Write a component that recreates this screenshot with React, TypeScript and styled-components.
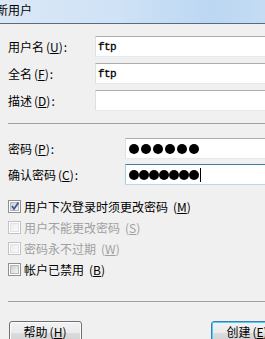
import React from "react";
import styled, { createGlobalStyle } from "styled-components";

const Global = createGlobalStyle`
  html, body { margin: 0; padding: 0; background: #f0f0f0; }
  body { font-family: "Noto Sans CJK SC", "Noto Sans", sans-serif; }
`;

const Window = styled.div`
  width: 265px;
  height: 339px;
  overflow: hidden;
  background: #f0f0f0;
  display: flex;
  flex-direction: column;
  font-size: 12px;
  color: #000;
`;

const TitleBar = styled.div`
  flex: none;
  border-bottom: 1px solid #5a6a80;
  background: linear-gradient(90deg, #dbe8f6 0%, #cfe2f6 45%, #bcd7f3 80%, #c4dcf4 100%);
  display: flex;
  align-items: center;
  box-sizing: border-box;
  height: 24px;
`;

const TitleText = styled.span`
  margin-left: -4px;
  font-size: 12px;
  line-height: 14px;
  color: #000;
  margin-top: -3px;
`;

const Section = styled.div<{ $top: number; $gap: number }>`
  display: flex;
  flex-direction: column;
  gap: ${(p) => p.$gap}px;
  padding-top: ${(p) => p.$top}px;
  padding-left: 8px;
`;

const Row = styled.div`
  display: flex;
  align-items: center;
  height: 21px;
`;

const Label = styled.div<{ $w: number }>`
  width: ${(p) => p.$w}px;
  flex: none;
  font-size: 12px;
  line-height: 14px;
  white-space: nowrap;
  padding-top: 1px;
`;

const TextBox = styled.div<{ $focus?: boolean }>`
  width: 200px;
  height: 21px;
  box-sizing: border-box;
  flex: none;
  background: #fff;
  border: 1px solid;
  border-color: ${(p) =>
    p.$focus ? "#3d7bad #b5cfe7 #b7d9ed #a4c9e3" : "#abadb3 #e3e9ef #e3e9ef #dbdfe6"};
  border-radius: 1px;
  display: flex;
  align-items: center;
  padding-left: 2px;
  font-family: "Liberation Mono", "DejaVu Sans Mono", monospace;
  font-size: 11px;
  letter-spacing: -0.6px;
  -webkit-text-stroke: 0.3px #000;
`;

const Dots = styled.div<{ $step: number }>`
  display: flex;
  align-items: center;
  gap: ${(p) => p.$step - 10}px;
  padding-left: 1px;
`;

const Dot = styled.span`
  width: 10px;
  height: 10px;
  border-radius: 50%;
  background: #000;
  flex: none;
`;

const Caret = styled.span`
  width: 1px;
  height: 14px;
  background: #000;
  margin-left: 1px;
`;

const Separator = styled.div<{ $top: number }>`
  height: 1px;
  background: #a0a0a0;
  margin-left: 8px;
  margin-top: ${(p) => p.$top}px;
  flex: none;
`;

const CheckRow = styled.div<{ $disabled?: boolean }>`
  display: flex;
  align-items: center;
  gap: 3px;
  height: 13px;
  color: ${(p) => (p.$disabled ? "#a0a0a0" : "#000")};
  font-size: 12px;
  line-height: 14px;
  white-space: nowrap;
`;

const Box = styled.span<{ $disabled?: boolean }>`
  position: relative;
  width: 13px;
  height: 13px;
  box-sizing: border-box;
  flex: none;
  border: 1px solid ${(p) => (p.$disabled ? "#c2c2c2" : "#8e8f8f")};
  background: #fff;
  &::before {
    content: "";
    position: absolute;
    left: 1px;
    top: 1px;
    width: 9px;
    height: 9px;
    box-sizing: border-box;
    border: 1px solid ${(p) => (p.$disabled ? "#e2e2e2" : "#b8b8b8")};
    background: ${(p) =>
      p.$disabled
        ? "linear-gradient(135deg, #ececec, #fafafa)"
        : "linear-gradient(135deg, #cfcfcf, #f4f4f4)"};
  }
`;

const Check = styled.svg`
  position: absolute;
  left: 1px;
  top: 0px;
  width: 10px;
  height: 10px;
`;

const Footer = styled.div`
  display: flex;
  gap: 129px;
  padding-left: 9px;
  margin-top: 19px;
`;

const Button = styled.div<{ $default?: boolean }>`
  width: 73px;
  height: 23px;
  flex: none;
  box-sizing: border-box;
  border: 1px solid ${(p) => (p.$default ? "#3c7fb1" : "#707070")};
  border-radius: 3px;
  background: linear-gradient(#f2f2f2 0%, #ebebeb 50%, #dddddd 51%, #cfcfcf 100%);
  box-shadow: inset 0 0 0 1px ${(p) => (p.$default ? "#48d0f6" : "#fcfcfc")};
  display: flex;
  justify-content: center;
  padding-top: 3px;
  font-size: 12px;
  line-height: 14px;
  white-space: nowrap;
`;

const AccKey = styled.span`
  margin-left: 2px;
  margin-right: 1px;
`;

const CheckMark = () => (
  <Check viewBox="0 0 10 10">
    <path d="M2 5 L4 8 L8.5 1.5" fill="none" stroke="#3d5a96" strokeWidth="1.8" />
  </Check>
);

const Acc = ({ k }: { k: string }) => (
  <AccKey>
    (<u>{k}</u>)
  </AccKey>
);

const dots = (n: number) =>
  Array.from({ length: n }, (_, i) => <Dot key={i} />);

export default function App() {
  return (
    <>
      <Global />
      <Window>
        <TitleBar>
          <TitleText>新用户</TitleText>
        </TitleBar>

        <Section $top={12} $gap={6}>
          <Row>
            <Label $w={87}>用户名<Acc k="U" />:</Label>
            <TextBox>ftp</TextBox>
          </Row>
          <Row>
            <Label $w={87}>全名<Acc k="F" />:</Label>
            <TextBox>ftp</TextBox>
          </Row>
          <Row>
            <Label $w={87}>描述<Acc k="D" />:</Label>
            <TextBox />
          </Row>
        </Section>

        <Separator $top={12} />

        <Section $top={14} $gap={5}>
          <Row>
            <Label $w={117}>密码<Acc k="P" />:</Label>
            <TextBox>
              <Dots $step={12}>{dots(6)}</Dots>
            </TextBox>
          </Row>
          <Row>
            <Label $w={117}>确认密码<Acc k="C" />:</Label>
            <TextBox $focus>
              <Dots $step={10}>{dots(7)}</Dots>
              <Caret />
            </TextBox>
          </Row>
        </Section>

        <Section $top={15} $gap={8}>
          <CheckRow>
            <Box>
              <CheckMark />
            </Box>
            用户下次登录时须更改密码<Acc k="M" />
          </CheckRow>
          <CheckRow $disabled>
            <Box $disabled />
            用户不能更改密码<Acc k="S" />
          </CheckRow>
          <CheckRow $disabled>
            <Box $disabled />
            密码永不过期<Acc k="W" />
          </CheckRow>
          <CheckRow>
            <Box />
            帐户已禁用<Acc k="B" />
          </CheckRow>
        </Section>

        <Separator $top={25} />

        <Footer>
          <Button>帮助<Acc k="H" /></Button>
          <Button $default>创建<Acc k="E" /></Button>
        </Footer>
      </Window>
    </>
  );
}
